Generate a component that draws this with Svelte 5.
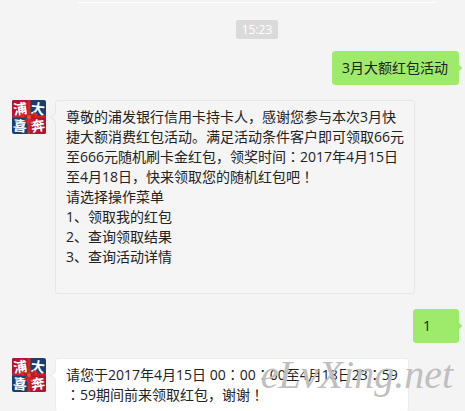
<script>
  const messages = [
    { from: 'me', lines: ['3月大额红包活动'] },
    {
      from: 'bank',
      lines: [
        '尊敬的浦发银行信用卡持卡人，感谢您参与本次3月快',
        '捷大额消费红包活动。满足活动条件客户即可领取66元',
        '至666元随机刷卡金红包，领奖时间：2017年4月15日',
        '至4月18日，快来领取您的随机红包吧！',
        '请选择操作菜单',
        '1、领取我的红包',
        '2、查询领取结果',
        '3、查询活动详情',
        ''
      ]
    },
    { from: 'me', lines: ['1'] },
    {
      from: 'bank',
      solid: true,
      lines: ['请您于2017年4月15日 00：00：00至4月18日23：59', '：59期间前来领取红包，谢谢！']
    }
  ];

  // Colons and exclamation marks are set centred in their full-width cell.
  const pieces = (line) => line.split(/([：！])/).filter(Boolean);
</script>

{#snippet avatar()}
  <svg class="avatar" viewBox="0 0 34 34" role="img" aria-label="浦大喜奔">
    <rect width="34" height="34" fill="#174072" />
    <path d="M0 0H17V17H0ZM17 17H34V34H17Z" fill="#b51331" />
    <path d="M15.5 0H18.5V34H15.5ZM0 15.5H34V17.5H0Z" fill="#cf2520" />
    <g class="seal">
      <text x="8" y="14" transform="rotate(-8 8 8)">浦</text>
      <text x="26" y="14" transform="rotate(7 26 8)">大</text>
      <text x="8" y="31" transform="rotate(6 8 26)">喜</text>
      <text x="26" y="31" transform="rotate(-9 26 26)">奔</text>
    </g>
    <path d="M17 17L11 13L9 15L11 18ZM17 17L22 12L26 14L24 18ZM16 17L11 22L14 22L16 25L18 18ZM17 17L20 24L21 21L24 21Z" fill="#d82a22" />
    <path d="M12 15L16 17L12 17M23 15L18 17L23 17M16 19L14 22M19 19L21 21" fill="none" stroke="#9c1720" stroke-width="0.8" />
    <circle cx="17" cy="17" r="2" fill="#ee4a36" />
  </svg>
{/snippet}

<main class="chat">
  <div class="history">
    <hr />
    <time>15:23</time>
  </div>
  {#each messages as message}
    <article class="row {message.from}">
      {#if message.from === 'bank'}{@render avatar()}{/if}
      <div class="bubble" class:solid={message.solid}>
        {#each message.lines as line}
          <p>{#each pieces(line) as piece}{#if piece === '：' || piece === '！'}<span class="mark">{piece}</span>{:else}{piece}{/if}{/each}</p>
        {/each}
      </div>
    </article>
  {/each}
  <div class="watermark">eLvXing.net</div>
</main>

<style>
  :global(body) {
    margin: 0;
    background: #f4f4f4;
  }
  .chat {
    position: relative;
    box-sizing: border-box;
    height: 100vh;
    overflow: hidden;
    padding-top: 2px;
    color: #222;
    font: 14px/20px 'Open Sans', 'Noto Sans CJK SC', sans-serif;
  }
  .history {
    display: flex;
    flex-direction: column;
    align-items: center;
    margin: 0 29px 12px 78px;
  }
  hr {
    width: 100%;
    height: 1px;
    margin: 0 0 17px;
    border: 0;
    background: #fff;
  }
  time {
    padding: 0 6px;
    border-radius: 2px;
    background: #dadada;
    color: #fff;
    font-size: 12px;
    line-height: 19px;
  }
  .row {
    display: flex;
    align-items: flex-start;
    margin: 0 6px 15px 12px;
  }
  .row.me {
    justify-content: flex-end;
  }
  .avatar {
    flex: none;
    width: 34px;
    height: 34px;
    margin-right: 9px;
    border-radius: 2px;
  }
  .seal {
    fill: #fff;
    font: 700 14px 'Noto Sans CJK SC', sans-serif;
    text-anchor: middle;
  }
  .bubble {
    position: relative;
    box-sizing: border-box;
    min-width: 46px;
    padding: 6px 10px;
    border: 1px solid #e7e7e7;
    border-radius: 3px;
    background: #f5f5f5;
  }
  .solid {
    border-color: #ececec;
    background: #fff;
  }
  .me .bubble {
    padding-left: 9px;
    border-color: #9eea6a;
    background: #9eea6a;
  }
  .bubble::before {
    content: '';
    position: absolute;
    top: 13px;
    left: -4px;
    width: 6px;
    height: 6px;
    border: solid #e7e7e7;
    border-width: 0 0 1px 1px;
    background: inherit;
    transform: rotate(45deg);
  }
  .me .bubble::before {
    right: -3px;
    left: auto;
    border: 0;
  }
  p {
    min-height: 20px;
    margin: 0;
  }
  .mark {
    font-family: 'Noto Sans CJK JP', sans-serif;
    line-height: 1;
  }
  .watermark {
    position: absolute;
    right: 12px;
    bottom: 16px;
    color: #bfbfbf;
    font: italic 40px/40px 'Liberation Serif', serif;
    pointer-events: none;
  }
</style>
